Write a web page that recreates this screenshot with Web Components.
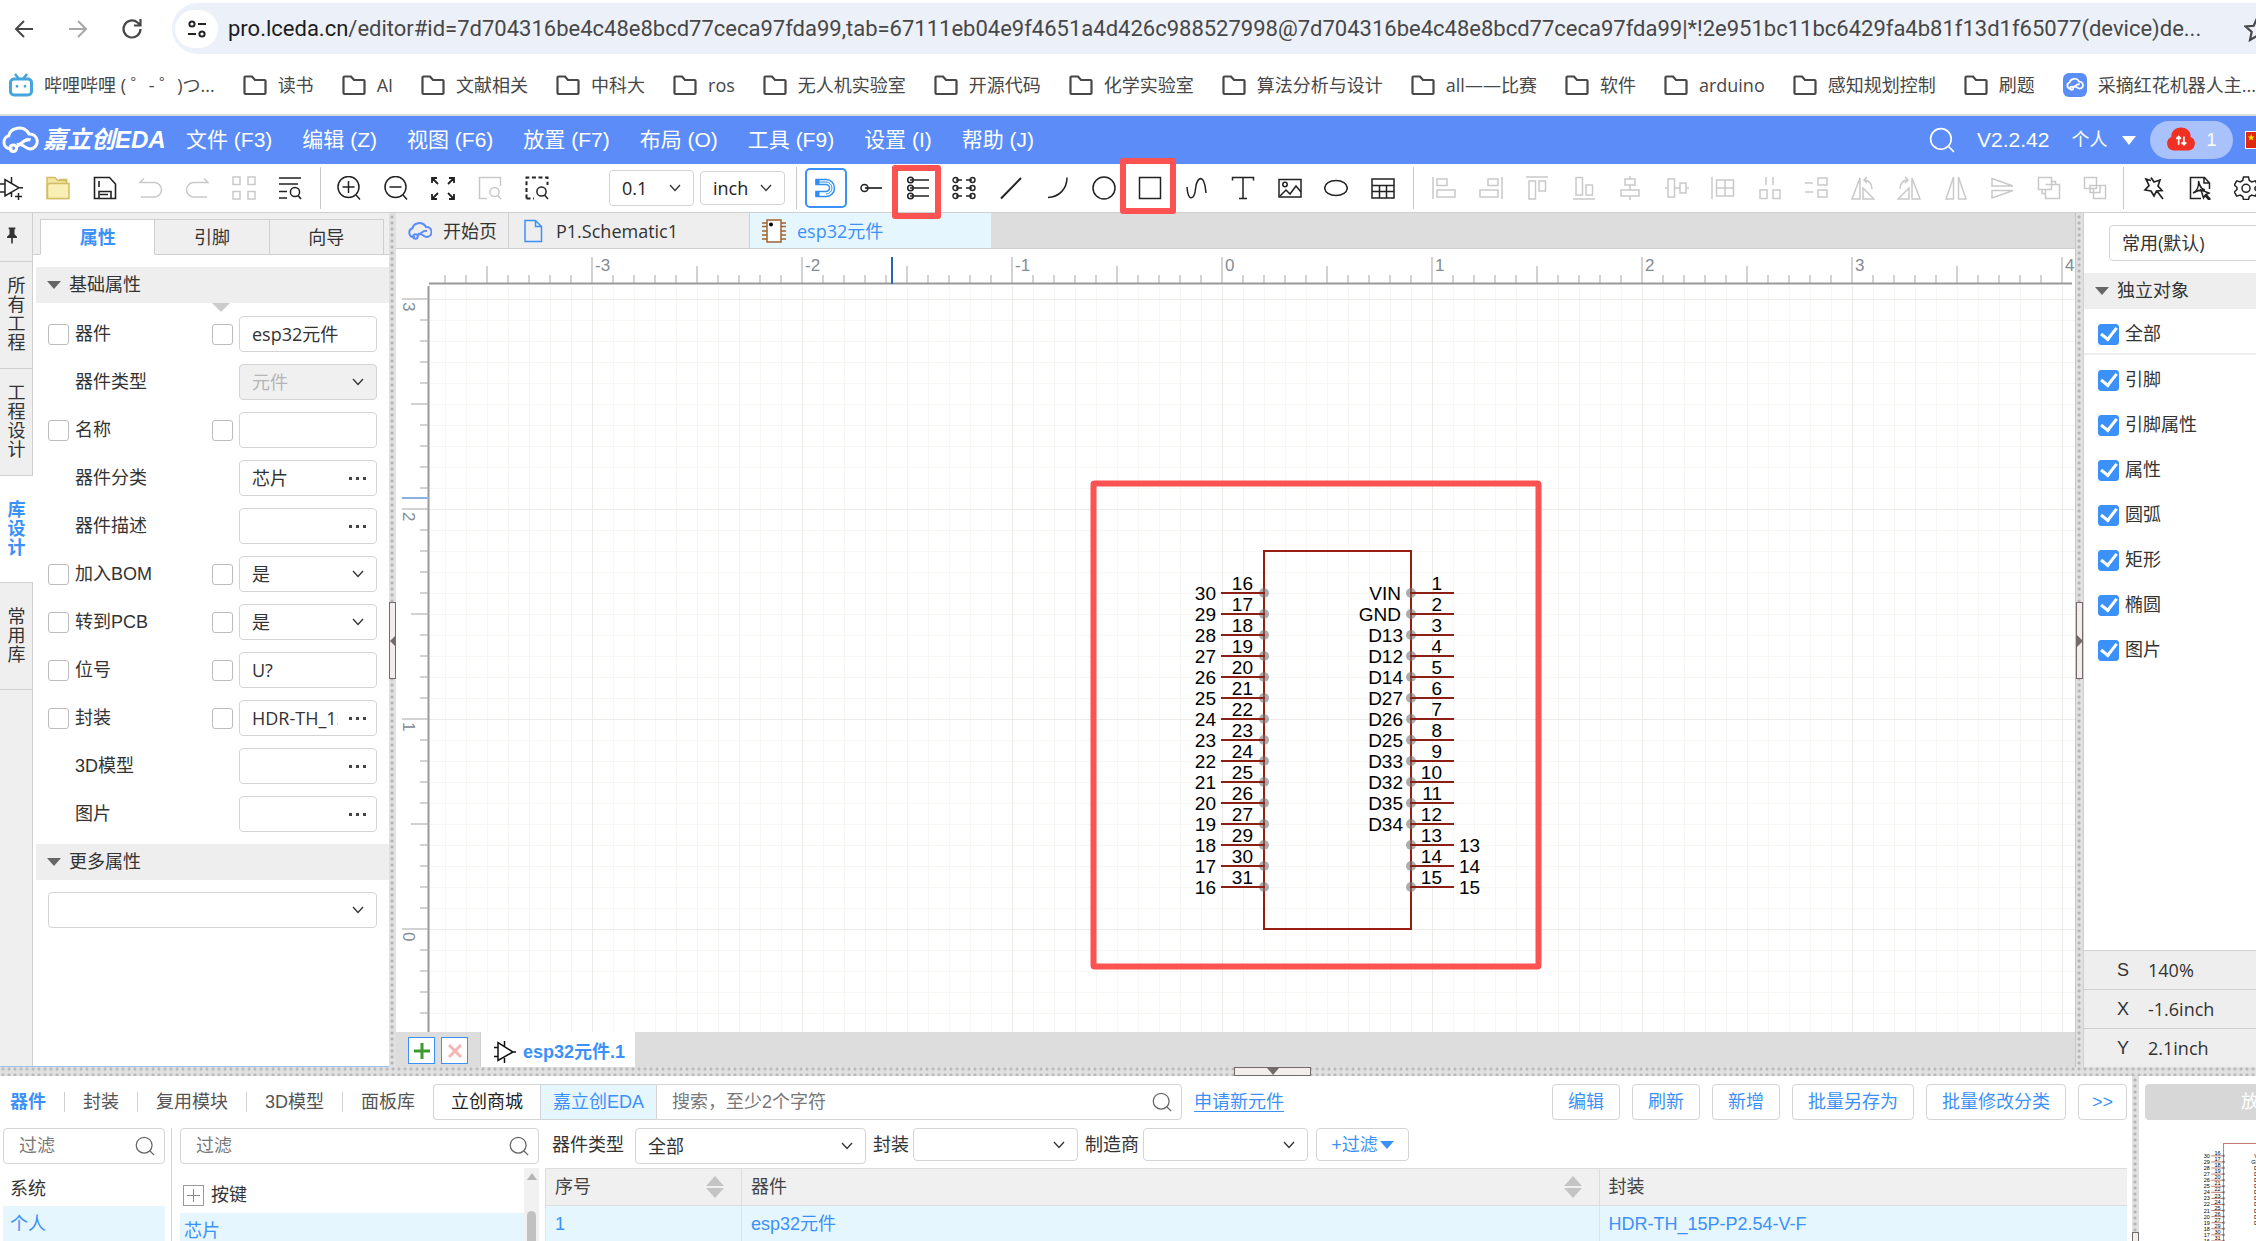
<!DOCTYPE html>
<html lang="zh-CN">
<head>
<meta charset="utf-8">
<title>嘉立创EDA</title>
<style>
html,body{height:100%;margin:0}
body{overflow:hidden;background:#fff;color:#333;font:18px/24px "Liberation Sans","Noto Sans CJK SC",sans-serif;
--blue:#3c91f8;--line:#cfcfcf;--field:#d4d4d4;--ui:"Open Sans","Noto Sans CJK SC",sans-serif}
eda-app{height:100vh}
</style>
</head>
<body>
<eda-app></eda-app>
<script>
const BASE = `*{box-sizing:border-box}button,input,select{font:inherit;color:inherit;margin:0}
button{background:none;border:0;padding:0;cursor:pointer;white-space:nowrap}svg{display:block;flex:none}[hidden]{display:none}`;

function define(name, css, html) {
  customElements.define(name, class extends HTMLElement {
    connectedCallback() {
      if (this.shadowRoot) return;
      const root = this.attachShadow({ mode: 'open' });
      root.innerHTML = `<style>${BASE}${css}</style>` + (typeof html === 'function' ? html(this) : html);
    }
  });
}

/* ---------- icons, 24 x 24 ---------- */
const CLOUD = '<path d="M7 18H5.500A4.500 4.500 0 0 1 4.500 9.200 6 6 0 0 1 9 4.500 7 7 0 0 1 18 8 5 5 0 0 1 19 18C15 18 14 13.500 10 15"/><path d="M19 12c-4-1.500-6 3-9.500 4.500"/><circle cx="7.500" cy="17.500" r="2.200"/>';
const ICONS = {
  back: '<path d="M21 12H4M12 4l-8 8 8 8" stroke-width="2"/>',
  forward: '<path d="M3 12h17M12 4l8 8-8 8" stroke-width="2"/>',
  reload: '<path d="M20.500 12A8.500 8.500 0 1 1 17.500 5.500L20 8M20.500 2v6.500H14" stroke-width="2.200"/>',
  tune: '<circle cx="7" cy="7" r="2.600" stroke-width="2"/><path d="M13 7h8M3 17h8" stroke-width="2.200"/><circle cx="17" cy="17" r="2.600" stroke-width="2"/>',
  star: '<path d="M12 2l3 7 7.500.7-5.600 5 1.600 7.500L12 18.300 5.500 22.200l1.600-7.500-5.600-5L9 9z" stroke-width="2"/>',
  bili: '<path d="M6 1l4 5M18 1l-4 5" stroke-width="2.600"/><rect x="1.500" y="6" width="21" height="16" rx="3.500" stroke-width="3"/><path d="M8 12v2.500M16 12v2.500" stroke-width="2.400"/>',
  folderline: '<path d="M1.500 20V4.500a1 1 0 0 1 1-1H9l3 3.500h9.500a1 1 0 0 1 1 1V20a1 1 0 0 1-1 1h-19a1 1 0 0 1-1-1z" stroke-width="2.200"/>',
  cloudapp: '<rect x="0" y="0" width="24" height="24" rx="6" fill="#5b8df9" stroke="none"/><g transform="translate(3.500 3) scale(.7)" stroke="#fff" stroke-width="2.600">'+CLOUD+'</g>',
  cloud: '<g stroke-width="2">'+CLOUD+'</g>',
  search: '<circle cx="11" cy="11" r="9.500"/><path d="M18 18l5 5"/>',
  opamp: '<path d="M5 3.500V20l14-8.200zM0 8h5M0 16h5M11.500 1v6.500M11.500 16.500V21M19 11.800h4M18.500 17v7M15 20.500h7"/>',
  opamp2: '<path d="M5 2.500v18L20 12zM1 7.500h4M1 16.500h4M11.500 1v5M11.500 18v5M20 12h3"/>',
  folder: '<path d="M1 1.500h8l3 3h8.500V22.500H1z" fill="#f3e6a2" stroke="#d3bd66"/><path d="M3 7.500h20v15H1.500V9z" fill="#f9efb4" stroke="#d3bd66"/><path d="M13 3.500h7.500v3" stroke="#d3bd66"/>',
  save: '<path d="M1.500 1.500h15l6 6.500v14.500h-21zM6 22.500v-7h12v7M6 5v6M7 18.500h8" stroke-width="1.600"/>',
  undo: '<path d="M5 2.500L1 6.500h15a7.300 7.300 0 0 1 0 14.500H2"/>',
  redo: '<path d="M19 2.500l4 4H8A7.300 7.300 0 0 0 8 21h14"/>',
  grid4: '<rect x="1" y="1" width="7" height="7.500"/><rect x="16" y="1" width="7" height="7.500"/><rect x="1" y="15.500" width="7" height="7.500"/><rect x="16" y="15.500" width="7" height="7.500"/>',
  listsearch: '<path d="M1 2h22M1 8h19M1 15.500h8M1 22h8"/><circle cx="17" cy="16" r="4.600"/><path d="M20 19.500l3 3.500" stroke-width="1.700"/>',
  zoomin: '<circle cx="11.500" cy="11" r="10.500"/><path d="M19 19l4 4.500M5.500 11h12M11.500 5v12"/>',
  zoomout: '<circle cx="11.500" cy="11" r="10.500"/><path d="M19 19l4 4.500M5.500 11h12"/>',
  fit: '<path d="M1 7V2h5M1 2l6 6M18 2h5v5M23 2l-6 6M1 18v5h5M1 23l6-6M23 18v5h-5M23 23l-6-6" stroke-width="1.800"/>',
  pagezoom: '<path d="M22.500 10V1.500h-21v21H9"/><circle cx="16.500" cy="16" r="4.600"/><path d="M19.500 19.500l3.500 3.500"/>',
  regionzoom: '<path d="M1.500 22.500v-21h21V9M1.500 22.500H9" stroke-dasharray="4 2.600" stroke-width="2"/><circle cx="16.500" cy="15.500" r="4.600"/><path d="M19.500 19l3.500 4"/>',
  magnet: '<path d="M2 3.500h10a8.500 8.500 0 0 1 0 17H2v-5h10a3.500 3.500 0 0 0 0-7H2z"/><path d="M3.500 3.500v5M3.500 15.500v5" stroke-width="4"/><path d="M5 6h7a6 6 0 0 1 0 12" stroke-width="1"/>',
  pin: '<circle cx="5.500" cy="12" r="3.500"/><path d="M6 12h17" stroke-width="1.700"/>',
  pins: '<circle cx="4.500" cy="4" r="2.800"/><circle cx="4.500" cy="12" r="2.800"/><circle cx="4.500" cy="20" r="2.800"/><path d="M4 4h19M4 12h19M4 20h19" stroke-width="1.700"/>',
  pinpairs: '<g stroke-width="1.400"><circle cx="3.500" cy="4" r="2.500"/><circle cx="3.500" cy="12" r="2.500"/><circle cx="3.500" cy="20" r="2.500"/><circle cx="20.500" cy="4" r="2.500"/><circle cx="20.500" cy="12" r="2.500"/><circle cx="20.500" cy="20" r="2.500"/><path d="M4 4h6M14 4h6M4 12h6M14 12h6M4 20h6M14 20h6"/></g>',
  line: '<path d="M2 22.500L22 2" stroke-width="2"/>',
  arc: '<path d="M22 1.500C22 13 14 21 3 21.500"/>',
  circle: '<circle cx="12" cy="12" r="11"/>',
  rect: '<rect x="1.500" y="1.500" width="21" height="21"/>',
  wave: '<path d="M2 11c1 16 7.500 12 8.500 2S16 0 18.500 5c2 4 2 8 2.500 12"/>',
  text: '<path d="M1.500 4.500V1.500h21v3M12 1.500v21M8 22.500h8"/>',
  image: '<rect x="1" y="3.500" width="22" height="17.500"/><circle cx="7" cy="8.500" r="2.200"/><path d="M2 20l6-6 4 4 6-8 5 6"/>',
  ellipse: '<ellipse cx="12" cy="12" rx="11.300" ry="7.500"/>',
  table: '<path d="M1 3h22v19H1zM1 9.500h22M1 15.500h22M8.500 9.500V22M15.500 9.500V22"/>',
  alignleft: '<path d="M1 1v22M5 3h10v6.500H5zM5 14h18v7H5z"/>',
  alignright: '<path d="M23 1v22M9 3h10v6.500H9zM1 14h18v7H1z"/>',
  aligntop: '<path d="M1 1h22M4 5h6.500v18H4zM14 5h6.500v10H14z"/>',
  alignbottom: '<path d="M1 23h22M4 1.500h6.500v17.500H4zM14 9h6.500v10H14z"/>',
  centerv: '<path d="M12 0v3M12 9v5M12 20v4M7 3h10v6H7zM3 14h18v6H3z"/>',
  centerh: '<path d="M0 12h3M9.500 12H15M21 12h3M3 3h6.500v18H3zM15 7h6v10h-6z"/>',
  gridalign: '<path d="M1 1v22M5.500 4h17v16h-17zM14 4v16M5.500 12h17"/>',
  spreadh: '<path d="M8 1v8M15 1v8M2 14h7v8.500H2zM15 14h7v8.500h-7z"/>',
  spreadv: '<path d="M1 7h8M1 16h8M14 2h9v7h-9zM14 14h9v7h-9z"/>',
  rotl: '<path d="M9 2v21H1zM12 12v11h11zM13 4c6 0 8 5 8 9M16 1l-3 3 3 3"/>',
  rotr: '<path d="M15 2v21h8zM12 12v11H1zM11 4C5 4 3 9 3 13M8 1l3 3-3 3"/>',
  fliph: '<path d="M9.500 1v22H2zM14.500 1v22H22z"/>',
  flipv: '<path d="M2 2.500l21 7.500H2zM2 22l21-7.500H2z"/>',
  front: '<path d="M1.500 1.500h13v12h-13zM8.500 8.500h14v14h-14v-9M5 13.500v4h3.500M14.500 5.500h4v3" />',
  behind: '<path d="M1.500 1.500h12v11h-12zM10.500 12.500v10h12v-13h-9M7 9.500h10v7H7z"/>',
  wand: '<path d="M9 1.500l3 4.500 6-2-2 6 4 4.500-5.500.5L12 20l-3-5-6-1 4-4.500L4 3l5 1.500M14.500 14.500L21 23" stroke-width="1.700"/>',
  pdf: '<path d="M13 22.500H2.500v-21h14L21.500 7v6M16 1.500V7h5.500M5 17c4-2 6-7 5.500-12 1 5 2.500 8 6.500 9-4-.500-8 .5-12 3M13 14l8 3-3 1.500L22 23l-1 1-4-4.500-1.500 2.500z" stroke-width="1.500"/>',
  gear: '<path d="M9.500 1h5l.8 3.500 2.500 1.400 3.500-1 2.400 4.200L21 11.500v2l2.700 2.400-2.400 4.200-3.500-1-2.500 1.400-.8 3h-5l-.8-3-2.500-1.400-3.500 1L.3 15.900 3 13.500v-2L.3 9.100l2.400-4.200 3.500 1 2.500-1.400z"/><circle cx="12" cy="12.300" r="4"/>',
  doc: '<path d="M4 1.500h10.500l6 6v15H4zM14.500 1.500v6h6"/>',
  chip: '<g stroke="#a0632c"><rect x="5" y="1" width="14" height="22" fill="#fff"/><path d="M0 4h5M0 7.500h5M0 16h5M0 20h5M19 4h5M19 7.500h5M19 12h5M19 16h5M19 20h5M0 12h5"/></g><circle cx="9" cy="5.500" r="2" fill="#000" stroke="none"/>',
  pushpin: '<path d="M8 3h8v2h-1v6l3 3v1.500h-5V21l-1 2-1-2v-5.500H6V14l3-3V5H8z" fill="currentColor" stroke="none"/>',
  sync: '<path d="M6 20a5.500 5.500 0 0 1-1.500-10.500C4 5 8 2 12 2s8 3 7.500 7.500A5.500 5.500 0 0 1 18 20z" fill="#f03022" stroke="none" transform="translate(-1.200 -1) scale(1.100)"/><path d="M10 16V9M8 11l2-2 2 2M14.500 9v7M12.500 14l2 2 2-2" stroke="#fff"/>'
};
const icon = (n, s = 24) => `<svg width="${s}" height="${s}" viewBox="0 0 24 24" fill="none" stroke="currentColor" stroke-width="1.500">${ICONS[n]}</svg>`;
const chevron = '<svg class="chev" width="12" height="8" viewBox="0 0 12 8" fill="none" stroke="currentColor" stroke-width="1.300"><path d="M1 1l5 5.500L11 1"/></svg>';
const a = (el, n, d = '') => el.getAttribute(n) ?? d;

/* ---------- small parts ---------- */
define('ui-icon', ':host{display:block;flex:none}', el => icon(a(el, 'name'), a(el, 'size', 24)));

define('tool-button', `:host{display:block;flex:none;position:relative}button{display:block}:host([off]){color:#c9c9c9}
:host([on]){color:#2f8ef5}:host([on]) button{border:2px solid #3c91f8;border-radius:5px;padding:6px 7px}
:host([mark]) :is(i){position:absolute;border:6px solid #fd5252;border-radius:3px;pointer-events:none;z-index:5}
:host([mark=pins]) i{inset:-11px -11px -19px -14px}:host([mark=rect]) i{inset:-18px -14px -14px -18px}`,
  el => `<button aria-label="${a(el, 'name')}">${icon(a(el, 'name'))}</button>${el.hasAttribute('mark') ? '<i></i>' : ''}`);

define('ui-select', `:host{display:grid;height:36px;align-items:center}select,svg{grid-area:1/1}
select{appearance:none;width:100%;height:100%;min-width:0;background:#fff;border:1px solid var(--field);border-radius:4px;padding:0 32px 0 12px;outline:0;font-family:var(--ui)}
select:disabled{background:#f0f0f0;color:#b5b5b5;opacity:1}svg{justify-self:end;margin-right:13px;pointer-events:none;color:#333}`,
  el => `<select aria-label="${a(el, 'label', '选择')}" ${el.hasAttribute('off') ? 'disabled' : ''}><option>${a(el, 'value')}</option></select>${chevron}`);

define('search-box', `:host{display:grid;height:36px;align-items:center}input,svg{grid-area:1/1}
input{width:100%;height:100%;min-width:0;background:#fff;border:1px solid var(--field);border-radius:4px;padding:0 40px 0 15px;outline:0}
:host([joined]) input{border-radius:0 4px 4px 0}
input::placeholder{color:#777;opacity:1}svg{justify-self:end;margin-right:10px;color:#666;pointer-events:none}`,
  el => `<input type="text" placeholder="${a(el, 'hint')}" aria-label="${a(el, 'hint')}">${icon('search', 20)}`);

define('check-box', `:host{display:block}label{display:flex;align-items:center;gap:6px;white-space:nowrap}
input{appearance:none;width:21px;height:21px;flex:none;border:1px solid #bdbdbd;border-radius:3px;background:#fff;display:grid;place-items:center}
input:checked{background:#3c91f8;border-color:#3c91f8}
input:checked::after{content:"";width:7px;height:13px;border:solid #fff;border-width:0 3px 3px 0;transform:translateY(-2px) rotate(38deg)}`,
  el => `<label><input type="checkbox" ${el.hasAttribute('on') ? 'checked' : ''} aria-label="${a(el, 'name') || el.textContent}"><span><slot></slot></span></label>`);

define('section-bar', `:host{display:flex;align-items:center;gap:8px;height:36px;background:#eee;padding-left:11px;position:relative}
i{border:7px solid transparent;border-top:8px solid #666;border-bottom:0}:host([arrow])::after{content:"";position:absolute;left:176px;top:36px;border:9px solid transparent;border-top:9px solid #ccc;border-bottom:0}`,
  '<i></i><span><slot></slot></span>');

define('prop-row', `:host{display:grid;grid-template-columns:21px 131px 21px 138px;column-gap:6px;align-items:center;height:36px}
.name{white-space:nowrap}.box{display:flex;align-items:center;height:36px;border:1px solid var(--field);border-radius:4px;padding:0 12px;overflow:hidden;background:#fff}
input{border:0;outline:0;background:none;width:100%;min-width:0;padding:0;font-family:var(--ui)}button{font-weight:bold;padding-left:11px;display:flex;gap:4px;margin-right:-2px}
b{width:3px;height:3px;background:#444}`,
  el => {
    const k = a(el, 'kind', 'text'), n = a(el, 'name'), v = a(el, 'value'), c = a(el, 'checks');
    const field = k === 'select' || k === 'off' ? `<ui-select label="${n}" value="${v}" ${k === 'off' ? 'off' : ''}></ui-select>`
      : `<div class="box"><input type="text" id="f" value="${v}" aria-label="${n}">${k === 'more' ? '<button aria-label="更多"><b></b><b></b><b></b></button>' : ''}</div>`;
    return `${c ? `<check-box name="${n}"></check-box>` : '<span></span>'}<label class="name" for="f">${n}</label>${c ? `<check-box name="显示${n}"></check-box>` : '<span></span>'}${field}`;
  });

define('split-bar', `:host{display:block;flex:none;background:#e0e0e0;position:relative}
:host([dir=v]){width:7px;background-image:radial-gradient(#b5b5b5 1px,transparent 2px);background-size:6px 6px;background-repeat:repeat-y;background-position:0 1px}
:host([dir=h]){height:9px;background-image:radial-gradient(#b9b9b9 1px,transparent 2px);background-size:6px 6px;background-position:0 -1px}
button{position:absolute;background:#f3eeee;border:1px solid #756a6a;display:grid;place-items:center;overflow:hidden}
:host([dir=v]) button{left:0;right:0;height:77px;top:var(--at)}:host([dir=h]) button{top:0;bottom:0;width:77px;left:54.700%}
i{border:6px solid transparent}:host([to=left]) i{border-right-color:#756a6a;border-left:0}:host([to=right]) i{border-left-color:#756a6a;border-right:0}:host([to=down]) i{border-top-color:#756a6a;border-bottom:0;border-top-width:7px}`,
  '<button aria-label="折叠"><i></i></button>');

/* ---------- browser chrome ---------- */
define('browser-bar', `:host{display:block;border-bottom:2px solid #ddd;height:116px;color:#474747;font-family:var(--ui)}
.nav{display:flex;align-items:center;padding-top:3px;height:54px}
.nav>button{margin-right:30px}.nav>button:first-child{margin-left:12px}.nav .dim{color:#a7a7a7}
.url{flex:1;display:flex;align-items:center;height:51px;background:#ecf0f8;border-radius:26px 0 0 26px;padding-left:3px;min-width:0;margin-left:-2px}
.site{width:43px;height:38px;border-radius:22px;background:#fff;display:grid;place-items:center;flex:none;margin-right:10px;color:#222}
.text{flex:1;font:22px/30px Roboto,sans-serif;white-space:nowrap}.text b{font-weight:400;color:#1c1c1c}.url ui-icon{margin-right:-14px}
nav{display:flex;gap:28px;padding:19px 0 0 9px;overflow:hidden}nav a{display:flex;align-items:center;gap:11px;color:inherit;text-decoration:none;white-space:nowrap;line-height:24px}`,
  () => {
    const marks = ['读书', 'AI', '文献相关', '中科大', 'ros', '无人机实验室', '开源代码', '化学实验室', '算法分析与设计', 'all——比赛', '软件', 'arduino', '感知规划控制', '刷题'];
    return `<div class="nav"><button aria-label="后退">${icon('back')}</button><button class="dim" aria-label="前进">${icon('forward')}</button><button aria-label="刷新">${icon('reload')}</button>
<div class="url"><button class="site" aria-label="网站信息">${icon('tune')}</button><span class="text"><b>pro.lceda.cn</b>/editor#id=7d704316be4c48e8bcd77ceca97fda99,tab=67111eb04e9f4651a4d426c988527998@7d704316be4c48e8bcd77ceca97fda99|*!2e951bc11bc6429fa4b81f13d1f65077(device)de...</span><ui-icon name="star" size="26"></ui-icon></div></div>
<nav><a href="#"><span style="color:#45a5dc">${icon('bili')}</span>哔哩哔哩 ( ゜- ゜)つ...</a>${marks.map(m => `<a href="#">${icon('folderline')}${m}</a>`).join('')}<a href="#">${icon('cloudapp')}采摘红花机器人主...</a></nav>`;
  });

/* ---------- application header ---------- */
define('app-header', `:host{display:flex;align-items:center;height:48px;background:#5b8cf8;color:#fff;font-size:21px;white-space:nowrap}
.logo{display:flex;align-items:center;gap:3px;font:italic bold 24px/30px "Liberation Sans","Noto Sans CJK SC",sans-serif;width:186px;flex:none}
nav{display:flex;gap:30px;flex:1}
.right{display:flex;align-items:center;width:327px;flex:none}
.ver{margin:0 22px}.me{display:flex;align-items:center;gap:15px;font-size:18px}.me i{border:7px solid transparent;border-top:9px solid #fff;border-bottom:0}
.sync{display:flex;align-items:center;gap:11px;background:#a9c2fb;border-radius:19px;height:38px;width:83px;padding-left:17px;color:#fff;margin:0 12px 0 14px;font-size:18px;flex:none}
.flag{width:30px;height:18px;background:#de2910;border:1px solid #fff;flex:none}`,
  () => `<div class="logo"><svg width="40" height="36" viewBox="0 0 24 24" fill="none" stroke="#fff" stroke-width="2">${CLOUD}</svg><span>嘉立创EDA</span></div>
<nav>${['文件 (F3)', '编辑 (Z)', '视图 (F6)', '放置 (F7)', '布局 (O)', '工具 (F9)', '设置 (I)', '帮助 (J)'].map(t => `<button>${t}</button>`).join('')}</nav>
<div class="right">${icon('search', 26)}<span class="ver">V2.2.42</span><button class="me">个人<i></i></button><button class="sync">${icon('sync', 28)}<span>1</span></button>
<svg class="flag" viewBox="0 0 30 18"><path d="M5 2l1 3h3L6.500 6.800l1 3L5 8l-2.500 1.800 1-3L1 5h3z" fill="#ffde00"/><circle cx="12" cy="3" r="1" fill="#ffde00"/><circle cx="12" cy="9" r="1" fill="#ffde00"/></svg></div>`);

define('tool-bar', `:host{display:flex;align-items:center;height:49px;border-bottom:1px solid var(--line);color:#222;background:#fff;position:relative;z-index:2}
.g{display:flex;align-items:center;justify-content:space-between;flex:none}.sep{width:1px;height:42px;background:#c9c9c9;flex:none}
ui-select{width:85px;flex:none;margin-right:6px;--ui:"Open Sans"}ui-select+ui-select{height:34px;margin-right:11px}`,
  () => {
    const b = s => s.split(' ').map(n => { const [i, f] = n.split(':'); return `<tool-button name="${i}" ${f || ''}></tool-button>`; }).join('');
    return `<div class="g" style="width:302px">${b('opamp folder save undo:off redo:off grid4:off listsearch')}</div><div class="sep" style="margin:0 16px 0 18px"></div>
<div class="g" style="width:212px;margin-right:60px">${b('zoomin zoomout fit pagezoom:off regionzoom')}</div>
<ui-select value="0.1" label="网格"></ui-select><ui-select value="inch" label="单位"></ui-select><div class="sep" style="margin-right:8px"></div>
<div class="g" style="margin-right:12px">${b('magnet:on')}</div><div class="g" style="width:536px">${b('pin pins:mark=pins pinpairs line arc circle rect:mark=rect wave text image ellipse table')}</div><div class="sep" style="margin:0 18px 0 18px"></div>
<div class="g" style="width:675px">${['alignleft', 'alignright', 'aligntop', 'alignbottom', 'centerv', 'centerh', 'gridalign', 'spreadh', 'spreadv', 'rotl', 'rotr', 'fliph', 'flipv', 'front', 'behind'].map(n => b(n + ':off')).join('')}</div>
<div class="sep" style="margin:0 18px 0 16px"></div><div class="g" style="width:116px">${b('wand pdf gear')}</div>`;
  });

/* ---------- left side ---------- */
define('side-dock', `:host{display:flex;flex-direction:column;width:33px;flex:none;background:#efefef;border-right:1px solid var(--line)}
.pin{height:48px;padding:12px 0 0 2px}button{height:107px;border-top:1px solid var(--line);line-height:19px;white-space:normal;width:33px;display:grid;place-items:center}
span{width:18px}.on{background:#fff;color:var(--blue);font-weight:bold}.end{border-top:1px solid var(--line)}`,
  `<div class="pin">${icon('pushpin', 20)}</div><button><span>所有工程</span></button><button><span>工程设计</span></button><button class="on"><span>库设计</span></button><button><span>常用库</span></button><div class="end"></div>`);

define('prop-panel', `:host{display:flex;flex-direction:column;width:356px;flex:none;background:#fff}
.tabs{display:flex;background:#efefef;height:42px;padding:6px 5px 0 7px;border-bottom:1px solid var(--line)}
.tabs button{flex:1;border:1px solid var(--line);border-left:0;height:36px;padding-top:1px}.tabs .on{background:#fff;color:var(--blue);font-weight:bold;border-left:1px solid var(--line);border-bottom-color:#fff}
.body{padding:12px 0 0 3px}.rows{display:flex;flex-direction:column;gap:12px;padding:13px 12px 12px}.rows.last{padding-top:12px}`,
  () => {
    const rows = [['器件', 'text', 'esp32元件', 1], ['器件类型', 'off', '元件', 0], ['名称', 'text', '', 1], ['器件分类', 'more', '芯片', 0], ['器件描述', 'more', '', 0], ['加入BOM', 'select', '是', 1], ['转到PCB', 'select', '是', 1], ['位号', 'text', 'U?', 1], ['封装', 'more', 'HDR-TH_15P-P2.54-V-F', 1], ['3D模型', 'more', '', 0], ['图片', 'more', '', 0]];
    return `<div class="tabs"><button class="on">属性</button><button>引脚</button><button>向导</button></div><div class="body"><section-bar arrow>基础属性</section-bar>
<div class="rows">${rows.map(r => `<prop-row name="${r[0]}" kind="${r[1]}" value="${r[2]}" ${r[3] ? 'checks="1"' : ''}></prop-row>`).join('')}</div>
<section-bar>更多属性</section-bar><div class="rows last"><ui-select label="更多属性"></ui-select></div></div>`;
  });

/* ---------- drawing canvas ---------- */
const LEFT = [['30', 16], ['29', 17], ['28', 18], ['27', 19], ['26', 20], ['25', 21], ['24', 22], ['23', 23], ['22', 24], ['21', 25], ['20', 26], ['19', 27], ['18', 29], ['17', 30], ['16', 31]];
const RIGHT = ['VIN', 'GND', 'D13', 'D12', 'D14', 'D27', 'D26', 'D25', 'D33', 'D32', 'D35', 'D34', '', '', ''];
/* Symbol with its body's top left corner at (0,0); one pin every 21 units. */
function symbol() {
  let s = '<g fill="none" stroke="#981c10" stroke-width="2"><rect x="0" y="0" width="147" height="378"/></g>', t = '';
  for (let i = 0; i < 15; i++) {
    const y = 42 + 21 * i;
    s += `<circle cx="0" cy="${y}" r="5" fill="#777" fill-opacity=".6"/><circle cx="147" cy="${y}" r="5" fill="#777" fill-opacity=".6"/><path d="M-43 ${y}H1M146 ${y}H190" stroke="#8c2014" stroke-width="2"/>`;
    t += `<text x="-48" y="${y + 7}" text-anchor="end">${LEFT[i][0]}</text><text x="-11" y="${y - 3}" text-anchor="end">${LEFT[i][1]}</text><text x="178" y="${y - 3}" text-anchor="end">${i + 1}</text>`;
    if (RIGHT[i]) t += `<text x="${i < 2 ? 137 : 139}" y="${y + 7}" text-anchor="end">${RIGHT[i]}</text>`;
    else t += `<text x="195" y="${y + 7}">${i + 1}</text>`;
  }
  return s + `<g font-family="Liberation Sans" font-size="19" fill="#000">${t}</g>`;
}
define('draw-canvas', ':host{display:block;flex:1;min-height:0;background:#fff}svg{width:100%;height:100%}', () => {
  const X0 = 826, Y0 = 680, TOP = 37, L = 33;
  let r = '', n = '';
  for (let i = -37; i <= 40; i++) {
    const x = X0 + 21 * i; if (x < 42 || x > 1675) continue;
    r += `M${x} ${i % 10 === 0 ? 8 : i % 5 === 0 ? 17 : 26}V34`;
    if (i % 10 === 0) n += `<text x="${x + 3}" y="22">${i / 10}</text>`;
  }
  for (let i = -4; i <= 30; i++) {
    const y = Y0 - 21 * i; if (y < TOP) continue;
    r += `M${i % 10 === 0 ? 6 : i % 5 === 0 ? 15 : 24} ${y}H${L}`;
    if (i % 10 === 0) n += `<text transform="translate(7 ${y + 3}) rotate(90)">${i / 10}</text>`;
  }
  return `<svg><defs><pattern id="m" x="${X0}" y="${Y0}" width="21" height="21" patternUnits="userSpaceOnUse"><path d="M0 .5H21M.5 0V21" stroke="#f6f6f3"/></pattern>
<pattern id="M" x="${X0}" y="${Y0}" width="210" height="210" patternUnits="userSpaceOnUse"><path d="M0 .5H210M.5 0V210" stroke="#ebebe8"/></pattern></defs>
<rect x="${L}" y="${TOP}" width="100%" height="100%" fill="url(#m)"/><rect x="${L}" y="${TOP}" width="100%" height="100%" fill="url(#M)"/>
<path d="M33 34.500H1676M32.500 37V2000" stroke="#999" stroke-width="2"/><path d="${r}" stroke="#a5a5a5" stroke-width="1"/>
<g fill="#828c96" font-size="17" font-family="Liberation Sans">${n}</g>
<path d="M496 8V35" stroke="#2a66b8" stroke-width="2"/><path d="M6 249H33" stroke="#8ab0e0" stroke-width="2"/>
<g transform="translate(868 302)">${symbol()}</g>
<rect x="697.500" y="234.500" width="445" height="483" rx="1" fill="none" stroke="#fd5252" stroke-width="6"/></svg>`;
});

define('doc-area', `:host{display:flex;flex-direction:column;flex:1;min-width:0;border-right:1px solid #c8c8c8}
.tabs{display:flex;height:36px;background:#ddd;border-bottom:1px solid var(--line);font-family:var(--ui)}
.tabs button{display:flex;align-items:center;gap:11px;background:#eee;border-right:1px solid var(--line);padding:0 12px;flex:none;text-align:left}
.tabs .d{width:241px}.tabs .on{background:#e6f6fe;color:var(--blue);border:0}.tabs span{display:block}
.sheets{display:flex;height:35px;background:#ddd;flex:none;padding-left:12px}.sheets .sq{width:27px;height:27px;border:1px solid var(--blue);background:#fff;margin:5px 6px 0 0;display:grid;place-items:center}
.sheets .tab{display:flex;align-items:center;gap:6px;background:#fff;color:var(--blue);font-weight:bold;border-left:1px solid var(--line);margin-left:6px;width:155px;padding:4px 0 0 12px}.tab svg{color:#111}`,
  `<div class="tabs"><button style="width:113px;color:#333"><span style="color:#5b8df9">${icon('cloud')}</span>开始页</button><button class="d"><span style="color:var(--blue)">${icon('doc')}</span>P1.Schematic1</button><button class="d on"><span>${icon('chip')}</span>esp32元件</button></div>
<draw-canvas></draw-canvas>
<div class="sheets"><button class="sq" aria-label="新增"><svg width="16" height="16" viewBox="0 0 16 16" stroke="#3f9a2d" stroke-width="3"><path d="M8 0v16M0 8h16"/></svg></button><button class="sq" aria-label="删除"><svg width="14" height="14" viewBox="0 0 14 14" stroke="#f7b6b2" stroke-width="3"><path d="M1 1l12 12M13 1L1 13"/></svg></button><button class="tab">${icon('opamp2')}esp32元件.1</button></div>`);

/* ---------- right side ---------- */
define('filter-panel', `:host{display:flex;flex-direction:column;width:173px;flex:none;border-left:1px solid var(--line);background:#fff}
.pick{margin:12px 0 12px 25px;width:200px}.all{height:46px;padding:13px 0 0 14px;border-bottom:2px solid #eee}.all+div{display:flex;flex-direction:column;gap:21px;padding:13px 0 0 14px}
check-box{line-height:24px;height:24px}dl{margin:auto 0 0;background:#eee;font-family:var(--ui)}dl div{display:grid;grid-template-columns:31px 1fr;align-items:center;height:39px;border-top:1px solid var(--line);padding-left:33px}dd{margin:0}dt{font-family:"Liberation Sans"}
section-bar{flex:none}.wrap{overflow:hidden}`,
  `<div class="wrap"><ui-select class="pick" value="常用(默认)" label="过滤方案"></ui-select></div><section-bar>独立对象</section-bar><div class="all"><check-box on>全部</check-box></div>
<div>${['引脚', '引脚属性', '属性', '圆弧', '矩形', '椭圆', '图片'].map(t => `<check-box on>${t}</check-box>`).join('')}</div>
<dl><div><dt>S</dt><dd>140%</dd></div><div><dt>X</dt><dd>-1.6inch</dd></div><div><dt>Y</dt><dd>2.1inch</dd></div></dl>`);

/* ---------- library drawer ---------- */
define('library-panel', `:host{display:flex;height:165px;flex:none;background:#fff}
.main{flex:1;min-width:0;display:flex;flex-direction:column;padding:8px 5px 0 3px}
.top{display:flex;align-items:center;height:36px}.kinds{display:flex}.kinds button{padding:0 18px;border-right:1px solid #d0d0d0;height:20px;line-height:20px;color:#555}.kinds button:first-child{padding-left:7px;color:var(--blue);font-weight:bold}.kinds button:last-child{border:0}
.src{display:flex;height:36px;flex:none}.src button{border:1px solid var(--field);border-right:0;padding:0 17px;border-radius:4px 0 0 4px;color:#222}.src button+button{background:#e6f6fe;color:var(--blue);border-radius:0;padding:0 12px}
.top search-box{width:526px}.top a{color:var(--blue);margin-left:12px;white-space:nowrap;flex:1;text-underline-offset:3px}
.acts{display:flex;gap:12px}.acts button,.add{height:36px;border:1px solid var(--field);border-radius:4px;color:var(--blue);padding:0 15px}.acts button:last-child{padding:0 13px}
.low{display:flex;flex:1;min-height:0;margin-top:8px}
.col{display:flex;flex-direction:column;flex:none}.own{width:162px;margin-right:6px}.own button{text-align:left;padding-left:7px;height:35px}.own button:nth-of-type(1){margin-top:7px}.own .on,.tree .on{background:#e6f6fe;color:var(--blue)}
.bar{width:1px;background:#d4d4d4;margin-right:8px}.tree{width:359px;margin-right:6px}.list{display:flex;flex:1;margin-top:4px;min-height:0}.items{flex:1}.items button{display:flex;align-items:center;gap:7px;width:100%;height:36px;padding-left:3px}.items button:first-child{margin-top:9px}.items button+button{padding-left:4px}
.plus{width:21px;height:21px;border:1px solid #999;display:grid;place-items:center}.scroll{width:15px;background:#f1f1f1;display:flex;flex-direction:column;align-items:center;padding-top:5px}.scroll i{border:5px solid transparent;border-bottom:7px solid #b5b5b5;border-top:0;margin-bottom:31px}.scroll b{width:9px;flex:1;border-radius:5px 5px 0 0;background:#c1c1c1}
.data{flex:1;min-width:0}.filters{display:flex;height:36px;align-items:flex-start;padding-left:7px}.filters label{line-height:34px;margin-right:4px;white-space:nowrap}.filters label.w{margin-right:11px}.filters ui-select{width:165px;height:33px;margin-right:7px}.filters ui-select.w{width:231px;height:36px}
.add{height:33px;margin-left:1px;width:93px;display:flex;align-items:center;justify-content:center}.add i{border:7px solid transparent;border-top:8px solid var(--blue);border-bottom:0;margin-left:2px}
table{width:100%;border-collapse:collapse;margin-top:4px;table-layout:fixed;text-align:left}th{font-weight:400;background:#f0f0f0;height:37px;border:1px solid #ddd;border-width:1px 0 1px 1px;padding:0 17px 0 9px;color:#444}td{background:#e6f6fe;color:var(--blue);height:37px;padding:0 9px;border-left:1px solid #dde3e6}
.th{display:flex;justify-content:space-between;align-items:center}.side{width:117px;flex:none;padding:8px 0 0 6px;overflow:hidden}.side button{width:228px;height:36px;background:#d7d7d7;color:#fff;border-radius:4px}.side svg{margin:23px 0 0 55px}`,
  () => {
    const sort = '<svg width="18" height="22" viewBox="0 0 18 22" fill="#c4c4c4"><path d="M9 0l9 10H0zM9 22l9-10H0z"/></svg>';
    return `<div class="main"><div class="top"><div class="kinds"><button>器件</button><button>封装</button><button>复用模块</button><button>3D模型</button><button>面板库</button></div>
<div class="src"><button>立创商城</button><button>嘉立创EDA</button></div><search-box joined hint="搜索，至少2个字符"></search-box><a href="#">申请新元件</a>
<div class="acts"><button>编辑</button><button>刷新</button><button>新增</button><button>批量另存为</button><button>批量修改分类</button><button>&gt;&gt;</button></div></div>
<div class="low"><div class="col own"><search-box hint="过滤"></search-box><button>系统</button><button class="on">个人</button></div><div class="bar"></div>
<div class="col tree"><search-box hint="过滤"></search-box><div class="list"><div class="items"><button><span class="plus"><svg width="13" height="13" viewBox="0 0 13 13" stroke="#888"><path d="M6.500 0v13M0 6.500h13"/></svg></span>按键</button><button class="on">芯片</button></div><div class="scroll"><i></i><b></b></div></div></div>
<div class="data"><div class="filters"><label class="w">器件类型</label><ui-select class="w" value="全部" label="器件类型"></ui-select><label>封装</label><ui-select label="封装"></ui-select><label>制造商</label><ui-select label="制造商"></ui-select><button class="add">+过滤<i></i></button></div>
<table><colgroup><col style="width:196px"><col><col style="width:528px"></colgroup><thead><tr><th><div class="th">序号${sort}</div></th><th><div class="th">器件${sort}</div></th><th>封装</th></tr></thead><tbody><tr><td>1</td><td>esp32元件</td><td>HDR-TH_15P-P2.54-V-F</td></tr></tbody></table></div></div></div>
<split-bar dir="v" to="left" style="--at:156px"></split-bar>
<div class="side"><button>放置</button><svg width="110" height="116" viewBox="-82 -2 380 400">${symbol()}</svg></div>`;
  });

define('eda-app', `:host{display:flex;flex-direction:column;overflow:hidden}.work{display:flex;flex:1;min-height:0}
.left{display:flex;border-bottom:1px solid #9cc0e8;flex:none}split-bar.v{--at:389px}browser-bar,app-header,tool-bar{flex:none}`,
  `<browser-bar></browser-bar><app-header></app-header><tool-bar></tool-bar>
<div class="work"><div class="left"><side-dock></side-dock><prop-panel></prop-panel></div><split-bar class="v" dir="v" to="left"></split-bar><doc-area></doc-area><split-bar class="v" dir="v" to="right"></split-bar><filter-panel></filter-panel></div>
<split-bar dir="h" to="down"></split-bar><library-panel></library-panel>`);
</script>
</body>
</html>
